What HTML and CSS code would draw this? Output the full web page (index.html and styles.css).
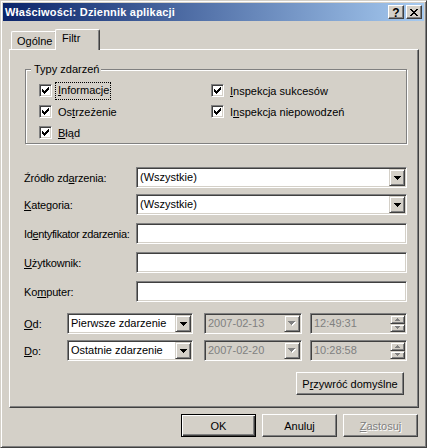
FILE: index.html
```html
<!DOCTYPE html>
<html lang="pl">
<head>
<meta charset="utf-8">
<link rel="stylesheet" href="styles.css">
</head>
<body>
<div class="window">
  <div class="titlebar">
    <span class="title">Właściwości: Dziennik aplikacji</span>
    <div class="capbtns">
      <span class="capbtn help">?</span>
      <span class="capbtn"><svg width="8" height="7" viewBox="0 0 8 7" shape-rendering="crispEdges"><path fill="#000" d="M0 0h2v1H0zM6 0h2v1H6zM1 1h2v1H1zM5 1h2v1H5zM2 2h4v1H2zM3 3h2v1H3zM2 4h4v1H2zM1 5h2v1H1zM5 5h2v1H5zM0 6h2v1H0zM6 6h2v1H6z"/></svg></span>
    </div>
  </div>

  <div class="tabs">
    <div class="tab">Ogólne</div>
    <div class="tab active">Filtr</div>
  </div>

  <div class="panel">
    <div class="group">
      <span class="legend">Typy zdarzeń</span>
      <div class="checks">
        <div class="check"><span class="cb"><svg width="11" height="11" viewBox="0 0 11 11" shape-rendering="crispEdges"><path d="M2 4h1v3H2zM3 5h1v3H3zM4 6h1v3H4zM5 5h1v3H5zM6 4h1v3H6zM7 3h1v3H7zM8 2h1v3H8z"/></svg></span><span class="focus"><u>I</u>nformacje</span></div>
        <div class="check"><span class="cb"><svg width="11" height="11" viewBox="0 0 11 11" shape-rendering="crispEdges"><path d="M2 4h1v3H2zM3 5h1v3H3zM4 6h1v3H4zM5 5h1v3H5zM6 4h1v3H6zM7 3h1v3H7zM8 2h1v3H8z"/></svg></span><span class="lbl">Os<u>t</u>rzeżenie</span></div>
        <div class="check"><span class="cb"><svg width="11" height="11" viewBox="0 0 11 11" shape-rendering="crispEdges"><path d="M2 4h1v3H2zM3 5h1v3H3zM4 6h1v3H4zM5 5h1v3H5zM6 4h1v3H6zM7 3h1v3H7zM8 2h1v3H8z"/></svg></span><span class="lbl"><u>B</u>łąd</span></div>
        <div class="check"><span class="cb"><svg width="11" height="11" viewBox="0 0 11 11" shape-rendering="crispEdges"><path d="M2 4h1v3H2zM3 5h1v3H3zM4 6h1v3H4zM5 5h1v3H5zM6 4h1v3H6zM7 3h1v3H7zM8 2h1v3H8z"/></svg></span><span class="lbl"><u>I</u>nspekcja sukcesów</span></div>
        <div class="check"><span class="cb"><svg width="11" height="11" viewBox="0 0 11 11" shape-rendering="crispEdges"><path d="M2 4h1v3H2zM3 5h1v3H3zM4 6h1v3H4zM5 5h1v3H5zM6 4h1v3H6zM7 3h1v3H7zM8 2h1v3H8z"/></svg></span><span class="lbl">I<u>n</u>spekcja niepowodzeń</span></div>
      </div>
    </div>

    <div class="row first">
      <span class="label">Źródło zd<u>a</u>rzenia:</span>
      <div class="field sunken combo"><span class="value">(Wszystkie)</span><span class="ddbtn"><svg width="7" height="4" viewBox="0 0 7 4" shape-rendering="crispEdges"><path d="M0 0h7v1H0zM1 1h5v1H1zM2 2h3v1H2zM3 3h1v1H3z"/></svg></span></div>
    </div>
    <div class="row second">
      <span class="label"><u>K</u>ategoria:</span>
      <div class="field sunken combo"><span class="value">(Wszystkie)</span><span class="ddbtn"><svg width="7" height="4" viewBox="0 0 7 4" shape-rendering="crispEdges"><path d="M0 0h7v1H0zM1 1h5v1H1zM2 2h3v1H2zM3 3h1v1H3z"/></svg></span></div>
    </div>
    <div class="row">
      <span class="label tight">Id<u>e</u>ntyfikator zdarzenia:</span>
      <div class="field sunken"></div>
    </div>
    <div class="row">
      <span class="label"><u>U</u>żytkownik:</span>
      <div class="field sunken"></div>
    </div>
    <div class="row">
      <span class="label">Ko<u>m</u>puter:</span>
      <div class="field sunken"></div>
    </div>

    <div class="rrow od">
      <span class="rlabel"><u>O</u>d:</span>
      <div class="sunken combo sel"><span class="value">Pierwsze zdarzenie</span><span class="ddbtn"><svg width="7" height="4" viewBox="0 0 7 4" shape-rendering="crispEdges"><path d="M0 0h7v1H0zM1 1h5v1H1zM2 2h3v1H2zM3 3h1v1H3z"/></svg></span></div>
      <div class="sunken combo date disabled"><span class="value">2007-02-13</span><span class="ddbtn"><svg width="8" height="5" viewBox="0 0 8 5" shape-rendering="crispEdges"><path fill="#fff" d="M1 1h7v1H1zM2 2h5v1H2zM3 3h3v1H3zM4 4h1v1H4z"/><path fill="#808080" d="M0 0h7v1H0zM1 1h5v1H1zM2 2h3v1H2zM3 3h1v1H3z"/></svg></span></div>
      <div class="sunken time disabled"><span class="value">12:49:31</span><span class="spin"><span class="sp up"><svg width="5" height="3" viewBox="0 0 5 3" shape-rendering="crispEdges"><path fill="#808080" d="M2 0h1v1H2zM1 1h3v1H1zM0 2h5v1H0z"/></svg></span><span class="sp dn"><svg width="5" height="3" viewBox="0 0 5 3" shape-rendering="crispEdges"><path fill="#808080" d="M0 0h5v1H0zM1 1h3v1H1zM2 2h1v1H2z"/></svg></span></span></div>
    </div>
    <div class="rrow do">
      <span class="rlabel"><u>D</u>o:</span>
      <div class="sunken combo sel"><span class="value">Ostatnie zdarzenie</span><span class="ddbtn"><svg width="7" height="4" viewBox="0 0 7 4" shape-rendering="crispEdges"><path d="M0 0h7v1H0zM1 1h5v1H1zM2 2h3v1H2zM3 3h1v1H3z"/></svg></span></div>
      <div class="sunken combo date disabled"><span class="value">2007-02-20</span><span class="ddbtn"><svg width="8" height="5" viewBox="0 0 8 5" shape-rendering="crispEdges"><path fill="#fff" d="M1 1h7v1H1zM2 2h5v1H2zM3 3h3v1H3zM4 4h1v1H4z"/><path fill="#808080" d="M0 0h7v1H0zM1 1h5v1H1zM2 2h3v1H2zM3 3h1v1H3z"/></svg></span></div>
      <div class="sunken time disabled"><span class="value">10:28:58</span><span class="spin"><span class="sp up"><svg width="5" height="3" viewBox="0 0 5 3" shape-rendering="crispEdges"><path fill="#808080" d="M2 0h1v1H2zM1 1h3v1H1zM0 2h5v1H0z"/></svg></span><span class="sp dn"><svg width="5" height="3" viewBox="0 0 5 3" shape-rendering="crispEdges"><path fill="#808080" d="M0 0h5v1H0zM1 1h3v1H1zM2 2h1v1H2z"/></svg></span></span></div>
    </div>

    <div class="restore">
      <span class="btn restore-btn">P<u>r</u>zywróć domyślne</span>
    </div>
  </div>

  <div class="buttons">
    <span class="btn default">OK</span>
    <span class="btn">Anuluj</span>
    <span class="btn disabled-btn"><u>Z</u>astosuj</span>
  </div>
</div>
</body>
</html>
```

FILE: styles.css
```css
* { box-sizing: border-box; }
html, body { margin: 0; padding: 0; }
body {
  width: 427px;
  height: 448px;
  overflow: hidden;
  background: #d4d0c8;
  font-family: "Liberation Sans", Arial, sans-serif;
  font-size: 11px;
  color: #000;
}
u { text-decoration: underline; text-underline-offset: 1px; }

.window {
  width: 427px;
  height: 448px;
  background: #d4d0c8;
  border: 1px solid;
  border-color: #d4d0c8 #404040 #404040 #d4d0c8;
  box-shadow: inset 1px 1px #fff, inset -1px -1px #808080;
  padding: 2px;
  display: flex;
  flex-direction: column;
}

/* title bar */
.titlebar {
  height: 18px;
  flex: none;
  background: linear-gradient(to right, #0a246a, #a6caf0);
  display: flex;
  align-items: center;
  padding-left: 2px;
}
.title {
  color: #fff;
  font-weight: bold;
  letter-spacing: 0.2px;
}
.capbtns {
  margin-left: auto;
  margin-right: 2px;
  display: flex;
  gap: 2px;
}
.capbtn {
  width: 16px;
  height: 14px;
  background: #d4d0c8;
  border: 1px solid;
  border-color: #fff #404040 #404040 #fff;
  box-shadow: inset -1px -1px #808080;
  display: flex;
  align-items: center;
  justify-content: center;
}
.help {
  font-weight: bold;
  font-size: 12px;
  line-height: 12px;
  padding-top: 1px;
}

/* tabs */
.tabs {
  flex: none;
  height: 20px;
  margin: 8px 0 0 8px;
  display: flex;
  align-items: flex-end;
}
.tab {
  height: 18px;
  border-left: 1px solid #fff;
  border-top: 1px solid #fff;
  border-right: 1px solid #404040;
  box-shadow: inset -1px 0 #808080;
  border-radius: 2px 2px 0 0;
  background: #d4d0c8;
  line-height: 18px;
}
.tab:first-child {
  width: 46px;
  padding-left: 5px;
}
.tab.active {
  position: relative;
  z-index: 1;
  width: 45px;
  height: 21px;
  margin-left: -2px;
  margin-bottom: -1px;
  padding-left: 6px;
  line-height: 17px;
}

/* panel */
.panel {
  flex: none;
  width: 410px;
  height: 359px;
  margin-left: 6px;
  border: 1px solid;
  border-color: #fff #404040 #404040 #fff;
  box-shadow: inset -1px -1px #808080;
  padding-left: 14px;
}

.group {
  position: relative;
  margin: 19px 0 0 1px;
  width: 382px;
  height: 75px;
  border: 1px solid #808080;
  box-shadow: inset 1px 1px #fff, 1px 1px #fff;
  padding: 10px 0 0 13px;
}
.legend {
  position: absolute;
  left: 5px;
  top: -8px;
  padding: 0 2px 0 3px;
  background: #d4d0c8;
  line-height: 14px;
}
.checks {
  display: grid;
  grid-template-columns: 172px 1fr;
  grid-template-rows: repeat(3, 21px);
  grid-auto-flow: column;
}
.check {
  display: flex;
  align-items: center;
}
.cb {
  width: 13px;
  height: 13px;
  flex: none;
  background: #fff;
  border: 1px solid;
  border-color: #808080 #fff #fff #808080;
  box-shadow: inset 1px 1px #404040, inset -1px -1px #d4d0c8;
  display: block;
}
.cb svg { display: block; }
.lbl { margin-left: 6px; }
.focus {
  margin-left: 4px;
  padding: 1px 1px 2px 2px;
  outline: 1px dotted #000;
  line-height: 13px;
}

/* form rows */
.row {
  display: flex;
  align-items: center;
  height: 21px;
  margin-top: 8px;
}
.row.first { margin-top: 23px; }
.row.second { margin-top: 6px; }
.label {
  width: 112px;
  flex: none;
  letter-spacing: -0.15px;
  white-space: nowrap;
}
.label.tight { letter-spacing: -0.35px; }
.field {
  width: 271px;
  height: 21px;
}
.sunken {
  background: #fff;
  border: 1px solid;
  border-color: #808080 #fff #fff #808080;
  box-shadow: inset 1px 1px #404040, inset -1px -1px #d4d0c8;
  padding: 1px;
}
.combo, .time {
  display: flex;
  align-items: center;
  height: 21px;
}
.value {
  flex: 1;
  padding-left: 2px;
  line-height: 17px;
  white-space: nowrap;
}
.ddbtn {
  width: 16px;
  height: 17px;
  flex: none;
  background: #d4d0c8;
  border: 1px solid;
  border-color: #d4d0c8 #404040 #404040 #d4d0c8;
  box-shadow: inset 1px 1px #fff, inset -1px -1px #808080;
  display: flex;
  align-items: center;
  justify-content: center;
}
.ddbtn svg { display: block; }

.rrow {
  display: flex;
  align-items: center;
  height: 21px;
}
.rrow.od { margin-top: 11px; }
.rrow.do { margin-top: 6px; }
.rlabel { width: 43px; flex: none; }
.sel { width: 126px; }
.date { width: 98px; margin-left: 11px; }
.time { width: 97px; margin-left: 8px; }
.disabled { background: #d4d0c8; color: #808080; }
.spin {
  width: 15px;
  height: 17px;
  flex: none;
  display: flex;
  flex-direction: column;
}
.sp {
  flex: 1;
  background: #d4d0c8;
  border: 1px solid;
  border-color: #d4d0c8 #404040 #404040 #d4d0c8;
  box-shadow: inset 1px 1px #fff, inset -1px -1px #808080;
  display: flex;
  align-items: center;
  justify-content: center;
}
.sp svg { display: block; }

.restore {
  width: 383px;
  margin-top: 11px;
  display: flex;
  justify-content: flex-end;
  padding-right: 3px;
}

/* buttons */
.btn {
  height: 23px;
  width: 75px;
  background: #d4d0c8;
  border: 1px solid;
  border-color: #fff #404040 #404040 #fff;
  box-shadow: inset -1px -1px #808080;
  display: flex;
  align-items: center;
  justify-content: center;
}
.restore-btn { width: 108px; }
.buttons {
  flex: none;
  display: flex;
  justify-content: flex-end;
  gap: 6px;
  margin-top: 6px;
  padding-right: 6px;
}
.btn.default {
  border: 1px solid #000;
  box-shadow: inset 1px 1px #fff, inset -1px -1px #404040, inset -2px -2px #808080;
}
.disabled-btn {
  color: #808080;
  text-shadow: 1px 1px 0 #fff;
}
```
